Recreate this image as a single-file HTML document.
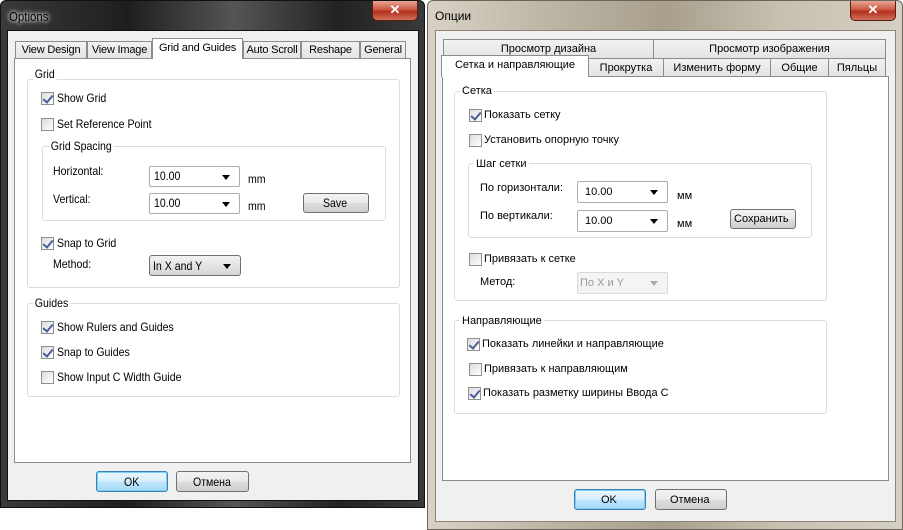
<!DOCTYPE html>
<html><head><meta charset="utf-8"><style>
*{margin:0;padding:0;box-sizing:border-box}
body{width:903px;height:527px;background:#fff;position:relative;overflow:hidden;font-family:"Liberation Sans",sans-serif;font-size:12px;color:#000}
.a{position:absolute}
.t{position:absolute;white-space:nowrap;line-height:14px}
.L .t{font-size:12px;transform:scaleX(.88);transform-origin:left top}
.L .tab .t{transform:none;font-size:11px;letter-spacing:-.2px}
.R .t{font-size:11px}
.cb{position:absolute;width:13px;height:13px;border:1px solid #8e8f8f;background:linear-gradient(135deg,#dcdcdc,#fff)}
.cb.c::after{content:"";position:absolute;left:3px;top:0px;width:4px;height:8px;border:solid #4a5f97;border-width:0 2px 2px 0;transform:rotate(40deg)}
.grp{position:absolute;border:1px solid #d5dfe5;border-radius:3px}
.combo{position:absolute;border:1px solid #abadb3;background:#fff;border-radius:2px}
.combo::after{content:"";position:absolute;right:9px;top:50%;margin-top:-2px;border:4px solid transparent;border-top:5px solid #000;border-bottom:0}
.combo.dis{border-color:#d9d9d9;background:#f4f4f4}
.combo.dis::after{border-top-color:#aaa}
.combo.btn{background:linear-gradient(#f3f3f3,#e3e3e3 50%,#d6d6d6);border-color:#707070}
.btn{position:absolute;border:1px solid #707070;border-radius:3px;background:linear-gradient(#f2f2f2,#ebebeb 50%,#dddddd 51%,#cfcfcf);text-align:center}
.def{border-color:#3c7fb1;background:linear-gradient(#eaf6fd,#d9f0fc 50%,#bee6fd 51%,#a7d9f5);box-shadow:inset 0 0 0 1px #7bd0f5}
.tab{position:absolute;border:1px solid #898c95;border-bottom:none;background:linear-gradient(#f2f2f2,#e3e3e3);text-align:center}
.tab .t{position:static;display:inline-block}
.tab.s{background:#fff;z-index:2}
.close{position:absolute;width:46px;height:20px;border:1px solid #5a1c14;border-top:none;border-radius:0 0 5px 5px;background:linear-gradient(#e8a493,#cb5a45 45%,#b5301c 55%,#d0715a);color:#fff;font-weight:bold;text-align:center;font-size:13px;line-height:18px}
</style></head><body>
<div class="a L" style="left:0;top:0;width:425px;height:508px;background:linear-gradient(90deg,#3a3a3a,#1e1e1e 30%,#555 55%,#222 80%,#3a3a3a);border-radius:6px 6px 0 0;border:1px solid #111">
<div class="t" style="left:8px;top:9px;font-size:13px;color:#000;text-shadow:0 0 6px #fff,0 0 4px #fff">Options</div>
<div class="close" style="left:371px;top:0">✕</div>
<div class="a" style="left:6px;top:29px;width:412px;height:471px;background:#f0f0f0;border:1px solid #111"></div>
</div>
<div class="L">
<div class="tab" style="left:15px;top:41px;width:72px;height:18px"><span class="t" style="line-height:17px">View Design</span></div>
<div class="tab" style="left:87px;top:41px;width:65px;height:18px"><span class="t" style="line-height:17px">View Image</span></div>
<div class="tab s" style="left:152px;top:38px;width:91px;height:21px"><span class="t" style="line-height:18px">Grid and Guides</span></div>
<div class="tab" style="left:243px;top:41px;width:58px;height:18px"><span class="t" style="line-height:17px">Auto Scroll</span></div>
<div class="tab" style="left:301px;top:41px;width:59px;height:18px"><span class="t" style="line-height:17px">Reshape</span></div>
<div class="tab" style="left:360px;top:41px;width:46px;height:18px"><span class="t" style="line-height:17px">General</span></div>
<div class="a" style="left:14px;top:58px;width:397px;height:405px;background:#fff;border:1px solid #898c95"></div>
<div class="grp" style="left:27px;top:79px;width:373px;height:209px"></div>
<div class="t" style="left:33px;top:67px;background:#fff;padding:0 2px">Grid</div>
<div class="cb c" style="left:41px;top:92px"></div><div class="t" style="left:57px;top:91px">Show Grid</div>
<div class="cb" style="left:41px;top:118px"></div><div class="t" style="left:57px;top:117px">Set Reference Point</div>
<div class="grp" style="left:42px;top:146px;width:344px;height:75px"></div>
<div class="t" style="left:49px;top:139px;background:#fff;padding:0 2px">Grid Spacing</div>
<div class="t" style="left:53px;top:164px">Horizontal:</div>
<div class="combo" style="left:149px;top:166px;width:91px;height:21px"></div><div class="t" style="left:154px;top:169px">10.00</div>
<div class="t" style="left:248px;top:172px">mm</div>
<div class="t" style="left:53px;top:192px">Vertical:</div>
<div class="combo" style="left:149px;top:193px;width:91px;height:21px"></div><div class="t" style="left:154px;top:196px">10.00</div>
<div class="t" style="left:248px;top:199px">mm</div>
<div class="btn" style="left:303px;top:193px;width:66px;height:20px"></div><div class="t" style="left:323px;top:196px">Save</div>
<div class="cb c" style="left:41px;top:237px"></div><div class="t" style="left:57px;top:236px">Snap to Grid</div>
<div class="t" style="left:53px;top:257px">Method:</div>
<div class="combo btn" style="left:149px;top:255px;width:92px;height:21px"></div><div class="t" style="left:153px;top:259px">In X and Y</div>
<div class="grp" style="left:27px;top:303px;width:373px;height:94px"></div>
<div class="t" style="left:33px;top:296px;background:#fff;padding:0 2px">Guides</div>
<div class="cb c" style="left:41px;top:321px"></div><div class="t" style="left:57px;top:320px">Show Rulers and Guides</div>
<div class="cb c" style="left:41px;top:346px"></div><div class="t" style="left:57px;top:345px">Snap to Guides</div>
<div class="cb" style="left:41px;top:371px"></div><div class="t" style="left:57px;top:370px">Show Input C Width Guide</div>
<div class="btn def" style="left:96px;top:471px;width:72px;height:21px"></div><div class="t" style="left:124px;top:475px">OK</div>
<div class="btn" style="left:176px;top:471px;width:73px;height:21px"></div><div class="t" style="left:193px;top:475px">Отмена</div>
</div>
<div class="a R" style="left:427px;top:0;width:476px;height:530px;background:linear-gradient(90deg,#d8d2c6,#bdb6a6 25%,#a89f8c 50%,#c8c1b2 75%,#d5d0c4);border-radius:6px 6px 0 0;border:1px solid #6a6558">
<div class="t" style="left:7px;top:8px;font-size:12px;color:#000">Опции</div>
<div class="close" style="left:422px;top:0">✕</div>
<div class="a" style="left:7px;top:29px;width:461px;height:492px;background:#f0f0f0;border:1px solid #8c8676"></div>
</div>
<div class="R">
<div class="tab" style="left:443px;top:39px;width:211px;height:19px"><span class="t" style="line-height:18px">Просмотр дизайна</span></div>
<div class="tab" style="left:653px;top:39px;width:233px;height:19px"><span class="t" style="line-height:18px">Просмотр изображения</span></div>
<div class="tab s" style="left:441px;top:55px;width:148px;height:22px"><span class="t" style="line-height:19px">Сетка и направляющие</span></div>
<div class="tab" style="left:588px;top:58px;width:76px;height:19px"><span class="t" style="line-height:18px">Прокрутка</span></div>
<div class="tab" style="left:663px;top:58px;width:108px;height:19px"><span class="t" style="line-height:18px">Изменить форму</span></div>
<div class="tab" style="left:770px;top:58px;width:59px;height:19px"><span class="t" style="line-height:18px">Общие</span></div>
<div class="tab" style="left:828px;top:58px;width:58px;height:19px"><span class="t" style="line-height:18px">Пяльцы</span></div>
<div class="a" style="left:442px;top:76px;width:447px;height:405px;background:#fff;border:1px solid #898c95"></div>
<div class="grp" style="left:454px;top:91px;width:373px;height:210px"></div>
<div class="t" style="left:460px;top:84px;background:#fff;padding:0 2px">Сетка</div>
<div class="cb c" style="left:469px;top:109px"></div><div class="t" style="left:484px;top:108px">Показать сетку</div>
<div class="cb" style="left:469px;top:134px"></div><div class="t" style="left:484px;top:133px">Установить опорную точку</div>
<div class="grp" style="left:468px;top:163px;width:344px;height:75px"></div>
<div class="t" style="left:474px;top:157px;background:#fff;padding:0 2px">Шаг сетки</div>
<div class="t" style="left:480px;top:181px">По горизонтали:</div>
<div class="combo" style="left:577px;top:181px;width:91px;height:22px"></div><div class="t" style="left:585px;top:185px">10.00</div>
<div class="t" style="left:677px;top:189px">мм</div>
<div class="t" style="left:480px;top:209px">По вертикали:</div>
<div class="combo" style="left:577px;top:210px;width:91px;height:22px"></div><div class="t" style="left:585px;top:214px">10.00</div>
<div class="t" style="left:677px;top:217px">мм</div>
<div class="btn" style="left:730px;top:209px;width:66px;height:20px"></div><div class="t" style="left:734px;top:212px">Сохранить</div>
<div class="cb" style="left:469px;top:253px"></div><div class="t" style="left:484px;top:252px">Привязать к сетке</div>
<div class="t" style="left:480px;top:275px">Метод:</div>
<div class="combo dis" style="left:577px;top:272px;width:91px;height:22px"></div><div class="t" style="left:580px;top:276px;color:#999">По X и Y</div>
<div class="grp" style="left:454px;top:320px;width:373px;height:94px"></div>
<div class="t" style="left:460px;top:314px;background:#fff;padding:0 2px">Направляющие</div>
<div class="cb c" style="left:467px;top:338px"></div><div class="t" style="left:482px;top:337px">Показать линейки и направляющие</div>
<div class="cb" style="left:469px;top:363px"></div><div class="t" style="left:484px;top:362px">Привязать к направляющим</div>
<div class="cb c" style="left:468px;top:387px"></div><div class="t" style="left:483px;top:386px">Показать разметку ширины Ввода С</div>
<div class="btn def" style="left:574px;top:489px;width:72px;height:21px"></div><div class="t" style="left:601px;top:493px">OK</div>
<div class="btn" style="left:655px;top:489px;width:72px;height:21px"></div><div class="t" style="left:670px;top:493px">Отмена</div>
</div>
</body></html>
